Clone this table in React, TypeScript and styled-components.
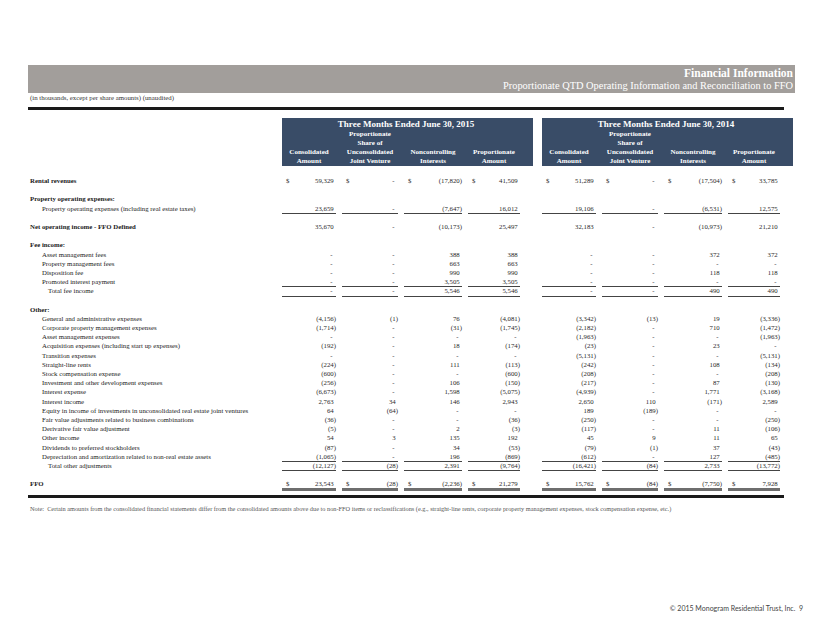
import React from 'react';
import styled, { createGlobalStyle } from 'styled-components';

const GlobalStyle = createGlobalStyle`
    html, body {
        margin: 0;
        padding: 0;
        background: #fff;
    }
    body {
        font-family: "Liberation Serif", "Times New Roman", serif;
        color: #222;
    }
`;

type Line =
    | { kind: 'gap' }
    | {
          kind: 'row';
          label: string;
          level: 0 | 1 | 2;
          bold?: boolean;
          dollar?: boolean;
          rule?: 'single' | 'double';
          values?: string[];
      };

const d = '-';

const LINES: Line[] = [
    { kind: 'row', label: 'Rental revenues', level: 0, bold: true, dollar: true, values: ['59,329', d, '(17,820)', '41,509', '51,289', d, '(17,504)', '33,785'] },
    { kind: 'gap' },
    { kind: 'row', label: 'Property operating expenses:', level: 0, bold: true },
    { kind: 'row', label: 'Property operating expenses (including real estate taxes)', level: 1, rule: 'single', values: ['23,659', d, '(7,647)', '16,012', '19,106', d, '(6,531)', '12,575'] },
    { kind: 'gap' },
    { kind: 'row', label: 'Net operating income - FFO Defined', level: 0, bold: true, values: ['35,670', d, '(10,173)', '25,497', '32,183', d, '(10,973)', '21,210'] },
    { kind: 'gap' },
    { kind: 'row', label: 'Fee income:', level: 0, bold: true },
    { kind: 'row', label: 'Asset management fees', level: 1, values: [d, d, '388', '388', d, d, '372', '372'] },
    { kind: 'row', label: 'Property management fees', level: 1, values: [d, d, '663', '663', d, d, d, d] },
    { kind: 'row', label: 'Disposition fee', level: 1, values: [d, d, '990', '990', d, d, '118', '118'] },
    { kind: 'row', label: 'Promoted interest payment', level: 1, rule: 'single', values: [d, d, '3,505', '3,505', d, d, d, d] },
    { kind: 'row', label: 'Total fee income', level: 2, rule: 'single', values: [d, d, '5,546', '5,546', d, d, '490', '490'] },
    { kind: 'gap' },
    { kind: 'row', label: 'Other:', level: 0, bold: true },
    { kind: 'row', label: 'General and administrative expenses', level: 1, values: ['(4,156)', '(1)', '76', '(4,081)', '(3,342)', '(13)', '19', '(3,336)'] },
    { kind: 'row', label: 'Corporate property management expenses', level: 1, values: ['(1,714)', d, '(31)', '(1,745)', '(2,182)', d, '710', '(1,472)'] },
    { kind: 'row', label: 'Asset management expenses', level: 1, values: [d, d, d, d, '(1,963)', d, d, '(1,963)'] },
    { kind: 'row', label: 'Acquisition expenses (including start up expenses)', level: 1, values: ['(192)', d, '18', '(174)', '(23)', d, '23', d] },
    { kind: 'row', label: 'Transition expenses', level: 1, values: [d, d, d, d, '(5,131)', d, d, '(5,131)'] },
    { kind: 'row', label: 'Straight-line rents', level: 1, values: ['(224)', d, '111', '(113)', '(242)', d, '108', '(134)'] },
    { kind: 'row', label: 'Stock compensation expense', level: 1, values: ['(600)', d, d, '(600)', '(208)', d, d, '(208)'] },
    { kind: 'row', label: 'Investment and other development expenses', level: 1, values: ['(256)', d, '106', '(150)', '(217)', d, '87', '(130)'] },
    { kind: 'row', label: 'Interest expense', level: 1, values: ['(6,673)', d, '1,598', '(5,075)', '(4,939)', d, '1,771', '(3,168)'] },
    { kind: 'row', label: 'Interest income', level: 1, values: ['2,763', '34', '146', '2,943', '2,650', '110', '(171)', '2,589'] },
    { kind: 'row', label: 'Equity in income of investments in unconsolidated real estate joint ventures', level: 1, values: ['64', '(64)', d, d, '189', '(189)', d, d] },
    { kind: 'row', label: 'Fair value adjustments related to business combinations', level: 1, values: ['(36)', d, d, '(36)', '(250)', d, d, '(250)'] },
    { kind: 'row', label: 'Derivative fair value adjustment', level: 1, values: ['(5)', d, '2', '(3)', '(117)', d, '11', '(106)'] },
    { kind: 'row', label: 'Other income', level: 1, values: ['54', '3', '135', '192', '45', '9', '11', '65'] },
    { kind: 'row', label: 'Dividends to preferred stockholders', level: 1, values: ['(87)', d, '34', '(53)', '(79)', '(1)', '37', '(43)'] },
    { kind: 'row', label: 'Depreciation and amortization related to non-real estate assets', level: 1, rule: 'single', values: ['(1,065)', d, '196', '(869)', '(612)', d, '127', '(485)'] },
    { kind: 'row', label: 'Total other adjustments', level: 2, rule: 'single', values: ['(12,127)', '(28)', '2,391', '(9,764)', '(16,421)', '(84)', '2,733', '(13,772)'] },
    { kind: 'gap' },
    { kind: 'row', label: 'FFO', level: 0, bold: true, dollar: true, rule: 'double', values: ['23,543', '(28)', '(2,236)', '21,279', '15,762', '(84)', '(7,750)', '7,928'] },
];

const PERIODS = ['Three Months Ended June 30, 2015', 'Three Months Ended June 30, 2014'];

const COLUMN_HEADS: string[][] = [
    ['', '', 'Consolidated', 'Amount'],
    ['Proportionate', 'Share of', 'Unconsolidated', 'Joint Venture'],
    ['', '', 'Noncontrolling', 'Interests'],
    ['', '', 'Proportionate', 'Amount'],
];

const Page = styled.div`
    width: 822px;
    height: 635px;
    overflow: hidden;
    display: flex;
    flex-direction: column;
`;

const Banner = styled.header`
    margin: 65px 0 0 28px;
    width: 767px;
    height: 28px;
    box-sizing: border-box;
    padding: 2px 2px 0 0;
    background: #a29e9b;
    color: #fff;
    text-align: right;
`;

const BannerTitle = styled.div`
    font-size: 11.5px;
    font-weight: bold;
    line-height: 13px;
`;

const BannerSubtitle = styled.div`
    font-size: 10.4px;
    line-height: 12px;
`;

const Content = styled.main`
    margin-left: 28px;
    width: 756px;
`;

const Caption = styled.div`
    margin-top: 0;
    padding-left: 2px;
    font-size: 6.8px;
    line-height: 10px;
    color: #333;
`;

const Rule = styled.div<{ $top: number }>`
    margin-top: ${(p) => p.$top}px;
    height: 3px;
    background: #1a1a1a;
`;

const Row = styled.div`
    display: grid;
    grid-template-columns: 245px 251px 251px;
    column-gap: 9px;
    align-items: start;
    height: 9.2px;
`;

const HeadRow = styled(Row)`
    height: 48px;
    margin-top: 8px;
    margin-bottom: 10.1px;
`;

const Group = styled.div`
    display: grid;
    grid-template-columns: 54px 56px 58px 52px;
    column-gap: 6px;
`;

const HeadBox = styled(Group)`
    height: 48px;
    grid-template-rows: 12px 36px;
    background: #394c67;
    color: #fff;
`;

const PeriodTitle = styled.div`
    grid-column: 1 / -1;
    padding-left: 10px;
    text-align: center;
    font-size: 9px;
    font-weight: bold;
    line-height: 12px;
`;

const HeadCell = styled.div`
    display: flex;
    flex-direction: column;
    font-size: 7px;
    font-weight: bold;
    line-height: 9px;
    text-align: center;
    white-space: nowrap;
`;

const Label = styled.div<{ $level: number; $bold?: boolean }>`
    padding-left: ${(p) => [2, 14, 20][p.$level]}px;
    font-size: 6.8px;
    line-height: 9.2px;
    font-weight: ${(p) => (p.$bold ? 'bold' : 'normal')};
    color: #222;
    white-space: nowrap;
`;

const Cell = styled.div<{ $rule?: 'single' | 'double' }>`
    display: flex;
    justify-content: space-between;
    height: 9.2px;
    padding-left: 4px;
    font-size: 6.8px;
    line-height: 9.2px;
    color: #2a2a2a;
    border-bottom: ${(p) =>
        p.$rule === 'double' ? '3px solid #6e6e6e' : p.$rule === 'single' ? '1.5px solid #444' : 'none'};
`;

const Amount = styled.span<{ $pad: number }>`
    padding-right: ${(p) => p.$pad}px;
`;

const Note = styled.div`
    margin-top: 6.3px;
    padding-left: 2px;
    font-size: 6.3px;
    line-height: 9px;
    color: #555;
    white-space: nowrap;
`;

const Footer = styled.footer`
    margin-top: auto;
    margin-bottom: 22px;
    padding-right: 19px;
    text-align: right;
    font-family: Lato, "Open Sans", sans-serif;
    font-size: 7px;
    line-height: 10px;
    color: #444;
`;

const padFor = (v: string) => (v.endsWith(')') ? 0 : v === '-' ? 3.5 : 2.3);

function ValueCell({ value, dollar, rule }: { value: string; dollar?: boolean; rule?: 'single' | 'double' }) {
    return (
        <Cell $rule={rule}>
            <span>{dollar ? '$' : ''}</span>
            <Amount $pad={padFor(value)}>{value}</Amount>
        </Cell>
    );
}

function DataRow({ line }: { line: Extract<Line, { kind: 'row' }> }) {
    const groups = line.values ? [line.values.slice(0, 4), line.values.slice(4)] : [[], []];
    return (
        <Row>
            <Label $level={line.level} $bold={line.bold}>
                {line.label}
            </Label>
            {groups.map((vals, gi) => (
                <Group key={gi}>
                    {vals.map((v, i) => (
                        <ValueCell key={i} value={v} dollar={line.dollar} rule={line.rule} />
                    ))}
                </Group>
            ))}
        </Row>
    );
}

export default function App() {
    return (
        <>
            <GlobalStyle />
            <Page>
                <Banner>
                    <BannerTitle>Financial Information</BannerTitle>
                    <BannerSubtitle>Proportionate QTD Operating Information and Reconciliation to FFO</BannerSubtitle>
                </Banner>
                <Content>
                    <Caption>(in thousands, except per share amounts) (unaudited)</Caption>
                    <Rule $top={4} />
                    <HeadRow>
                        <div />
                        {PERIODS.map((period) => (
                            <HeadBox key={period}>
                                <PeriodTitle>{period}</PeriodTitle>
                                {COLUMN_HEADS.map((lines, i) => (
                                    <HeadCell key={i}>
                                        {lines.map((t, j) => (
                                            <span key={j}>{t || '\u00a0'}</span>
                                        ))}
                                    </HeadCell>
                                ))}
                            </HeadBox>
                        ))}
                    </HeadRow>
                    {LINES.map((line, i) =>
                        line.kind === 'gap' ? <Row key={i} /> : <DataRow key={i} line={line} />
                    )}
                    <Rule $top={6.6} />
                    <Note>
                        Note:&nbsp; Certain amounts from the consolidated financial statements differ from the consolidated
                        amounts above due to non-FFO items or reclassifications (e.g., straight-line rents, corporate property
                        management expenses, stock compensation expense, etc.)
                    </Note>
                </Content>
                <Footer>© 2015 Monogram Residential Trust, Inc.&nbsp; 9</Footer>
            </Page>
        </>
    );
}
